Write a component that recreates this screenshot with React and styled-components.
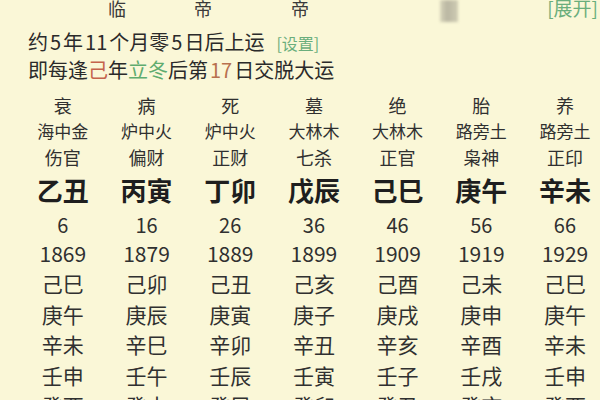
import React from "react";
import styled, { createGlobalStyle } from "styled-components";

const GlobalStyle = createGlobalStyle`
  body {
    margin: 0;
    background: #faf7d7;
    font-family: "Noto Sans CJK SC", "Noto Sans", sans-serif;
    color: #2e2e2e;
  }
`;

const columns = [
  { stage: "衰", nayin: "海中金", god: "伤官", pillar: "乙丑", age: 6, year: 1869, years: ["己巳", "庚午", "辛未", "壬申", "癸酉"] },
  { stage: "病", nayin: "炉中火", god: "偏财", pillar: "丙寅", age: 16, year: 1879, years: ["己卯", "庚辰", "辛巳", "壬午", "癸未"] },
  { stage: "死", nayin: "炉中火", god: "正财", pillar: "丁卯", age: 26, year: 1889, years: ["己丑", "庚寅", "辛卯", "壬辰", "癸巳"] },
  { stage: "墓", nayin: "大林木", god: "七杀", pillar: "戊辰", age: 36, year: 1899, years: ["己亥", "庚子", "辛丑", "壬寅", "癸卯"] },
  { stage: "绝", nayin: "大林木", god: "正官", pillar: "己巳", age: 46, year: 1909, years: ["己酉", "庚戌", "辛亥", "壬子", "癸丑"] },
  { stage: "胎", nayin: "路旁土", god: "枭神", pillar: "庚午", age: 56, year: 1919, years: ["己未", "庚申", "辛酉", "壬戌", "癸亥"] },
  { stage: "养", nayin: "路旁土", god: "正印", pillar: "辛未", age: 66, year: 1929, years: ["己巳", "庚午", "辛未", "壬申", "癸酉"] },
];

const App = () => {
  return (
    <Page>
      <GlobalStyle />
      <TopBar>
        <TopChar>临</TopChar>
        <TopChar offset={68}>帝</TopChar>
        <TopChar offset={79}>帝</TopChar>
        <Blur />
        <Spacer />
        <Link>[展开]</Link>
      </TopBar>
      <Info>
        <InfoLine>
          约<Num>5</Num>年<Num>11</Num>个月零<Num>5</Num>日后上运
          <Link small>[设置]</Link>
        </InfoLine>
        <InfoLine>
          即每逢<Mark color="#c4634c">己</Mark>年<Mark color="#5fac6f">立冬</Mark>后第
          <Num color="#b8714f">17</Num>日交脱大运
        </InfoLine>
      </Info>
      <Table>
        <Row h={26} size={18}>
          {columns.map((c, i) => <Cell key={i}>{c.stage}</Cell>)}
        </Row>
        <Row h={26} size={17}>
          {columns.map((c, i) => <Cell key={i}>{c.nayin}</Cell>)}
        </Row>
        <Row h={26} size={18}>
          {columns.map((c, i) => <Cell key={i}>{c.god}</Cell>)}
        </Row>
        <Row h={40} size={26} bold>
          {columns.map((c, i) => <Cell key={i}>{c.pillar}</Cell>)}
        </Row>
        <Row h={29} size={20}>
          {columns.map((c, i) => <Cell key={i}>{c.age}</Cell>)}
        </Row>
        <Row h={29} size={21}>
          {columns.map((c, i) => <Cell key={i}>{c.year}</Cell>)}
        </Row>
        {[0, 1, 2, 3, 4].map((r) => (
          <Row key={r} h={30.5} size={21}>
            {columns.map((c, i) => <Cell key={i}>{c.years[r]}</Cell>)}
          </Row>
        ))}
      </Table>
    </Page>
  );
};

export default App;

const Page = styled.div`
  width: 600px;
  height: 400px;
  overflow: hidden;
  background: #faf7d7;
`;

const TopBar = styled.div`
  height: 22px;
  display: flex;
  align-items: flex-start;
  padding-left: 108px;
  padding-right: 2px;
`;

const TopChar = styled.span`
  font-size: 18px;
  line-height: 16px;
  color: #3a3a3a;
  margin-left: ${(p) => p.offset || 0}px;
`;

const Blur = styled.span`
  width: 18px;
  height: 22px;
  margin-left: 131px;
  background: linear-gradient(90deg, #d8d5bb, #b9b6a2 40%, #cfccb4);
  filter: blur(1.5px);
`;

const Spacer = styled.span`
  flex: 1;
`;

const Link = styled.span`
  color: #6aae7c;
  white-space: nowrap;
  font-size: ${(p) => (p.small ? "16px" : "19px")};
  line-height: ${(p) => (p.small ? "28px" : "16px")};
  margin-left: ${(p) => (p.small ? "12px" : "0")};
`;

const Info = styled.div`
  margin-top: 6px;
  padding-left: 28px;
`;

const InfoLine = styled.div`
  font-size: 20px;
  line-height: 28px;
  height: 28px;
  color: #2a2a2a;
  white-space: nowrap;
`;

const Mark = styled.span`
  color: ${(p) => p.color};
`;

const Num = styled.span`
  margin: 0 2px;
  color: ${(p) => p.color || "inherit"};
`;

const Table = styled.div`
  margin-top: 8px;
  padding-left: 21px;
`;

const Row = styled.div`
  display: grid;
  grid-template-columns: repeat(7, 83.7px);
  height: ${(p) => p.h}px;
  line-height: ${(p) => p.h}px;
  font-size: ${(p) => p.size}px;
  font-weight: ${(p) => (p.bold ? 700 : 400)};
  color: ${(p) => (p.bold ? "#1e1e1e" : "#303030")};
`;

const Cell = styled.div`
  text-align: center;
  white-space: nowrap;
`;
